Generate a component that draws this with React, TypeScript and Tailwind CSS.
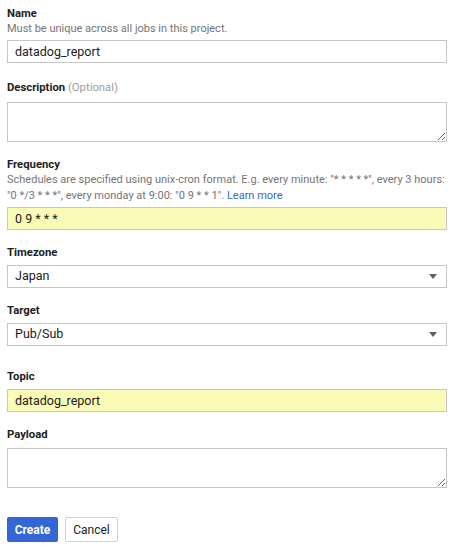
const fieldClass =
    "block w-full h-[23px] border border-[#c6c6c6] px-[7px] text-[12.5px] text-[#212121] outline-none";
const areaClass =
    "block w-full h-[40px] border border-[#c6c6c6] px-[7px] py-[4px] text-[12.5px] text-[#212121] outline-none";
const labelClass = "block text-[11.3px] leading-[14px] font-bold text-[#212121]";
const hintClass = "text-[11px] leading-[16px] text-[#757575]";

function SelectBox({ value }: { value: string }) {
    return (
        <div className="flex h-[23px] w-full items-center justify-between border border-[#c6c6c6] bg-white pl-[7px] pr-[9px] text-[12.5px] text-[#212121]">
            <span>{value}</span>
            <svg width="8" height="5" viewBox="0 0 8 5">
                <path d="M0 0h8L4 5z" fill="#616161" />
            </svg>
        </div>
    );
}

export default function App() {
    return (
        <div
            className="min-h-screen bg-white px-[7px] pt-[7px]"
            style={{ fontFamily: "Roboto, 'Liberation Sans', sans-serif" }}
        >
            <div className="w-[440px]">
                <label className={labelClass}>Name</label>
                <p className={hintClass}>Must be unique across all jobs in this project.</p>
                <input className={`${fieldClass} mt-[3px]`} defaultValue="datadog_report" />

                <label className={`${labelClass} mt-[18px]`}>
                    Description <span className="font-normal text-[#9e9e9e]">(Optional)</span>
                </label>
                <textarea className={`${areaClass} mt-[7px]`} />

                <label className={`${labelClass} mt-[16px]`}>Frequency</label>
                <p className={hintClass}>
                    Schedules are specified using unix-cron format. E.g. every minute: "* * * * *", every 3 hours:
                    "0 */3 * * *", every monday at 9:00: "0 9 * * 1".{" "}
                    <a className="text-[#3367d6]" href="#">
                        Learn more
                    </a>
                </p>
                <input className={`${fieldClass} mt-[3px] bg-[#fafbb6]`} defaultValue="0 9 * * *" />

                <label className={`${labelClass} mt-[16px]`}>Timezone</label>
                <div className="mt-[5px]">
                    <SelectBox value="Japan" />
                </div>

                <label className={`${labelClass} mt-[16px]`}>Target</label>
                <div className="mt-[5px]">
                    <SelectBox value="Pub/Sub" />
                </div>

                <label className={`${labelClass} mt-[24px]`}>Topic</label>
                <input className={`${fieldClass} mt-[5px] bg-[#fafbb6]`} defaultValue="datadog_report" />

                <label className={`${labelClass} mt-[16px]`}>Payload</label>
                <textarea className={`${areaClass} mt-[6px]`} />

                <div className="mt-[29px] flex gap-[7px]">
                    <button className="h-[25px] w-[51px] rounded-[2px] bg-[#3367d6] text-[12px] font-bold text-white">
                        Create
                    </button>
                    <button className="h-[25px] w-[53px] rounded-[2px] border border-[#d0d0d0] bg-white text-[12px] text-[#212121]">
                        Cancel
                    </button>
                </div>
            </div>
        </div>
    );
}
